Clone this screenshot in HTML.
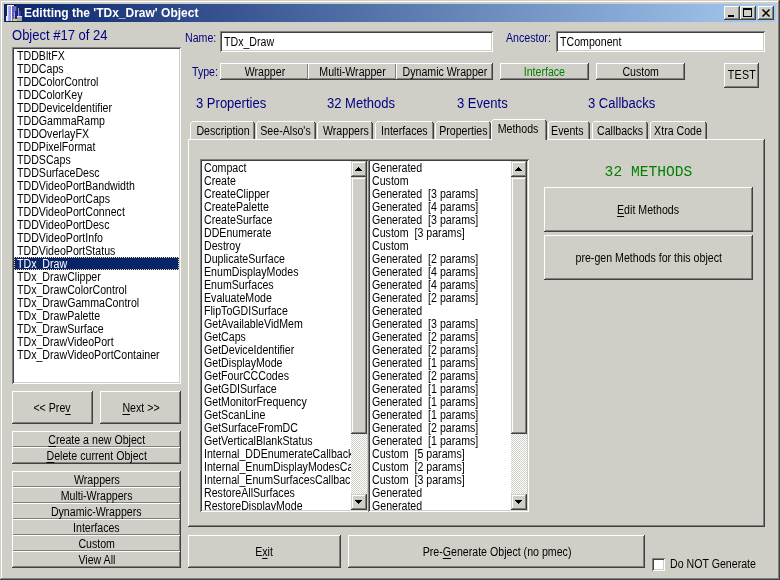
<!DOCTYPE html>
<html><head><meta charset="utf-8"><title>Editting the TDx_Draw Object</title>
<style>
html,body{margin:0;padding:0;}
body{width:780px;height:580px;overflow:hidden;background:#d0cfc7;font-family:"Liberation Sans",sans-serif;font-size:12px;color:#000;position:relative;}
*{box-sizing:border-box;}
.a{position:absolute;}
.win{left:0;top:0;width:780px;height:580px;background:#d0cfc7;box-shadow:inset -1px -1px 0 #404040,inset 1px 1px 0 #d0cfc7,inset -2px -2px 0 #808080,inset 2px 2px 0 #fff;}
.title{left:4px;top:4px;width:772px;height:18px;background:linear-gradient(90deg,#0a246a 0%,#a6caf0 100%);}
.title .tx{left:20px;top:2px;color:#fff;font-weight:bold;font-size:12px;line-height:14px;white-space:pre;}
.btn{background:#d0cfc7;box-shadow:inset -1px -1px 0 #404040,inset 1px 1px 0 #fff,inset -2px -2px 0 #808080;text-align:center;white-space:pre;}
.btn .t{display:inline-block;transform:scaleX(0.885);transform-origin:50% 50%;}
.sbtn{background:#d0cfc7;box-shadow:inset -1px -1px 0 #404040,inset 1px 1px 0 #d0cfc7,inset -2px -2px 0 #808080,inset 2px 2px 0 #fff;}
.sunk{background:#fff;box-shadow:inset 1px 1px 0 #808080,inset -1px -1px 0 #fff,inset 2px 2px 0 #404040,inset -2px -2px 0 #d0cfc7;}
.lt{display:block;transform:scaleX(0.885);transform-origin:0 50%;white-space:pre;}
.row{position:absolute;left:0;height:13px;line-height:13px;padding-top:1px;font-size:12px;white-space:pre;}
.lbl{color:#000080;white-space:pre;}
.big{font-size:14px;color:#000080;white-space:pre;line-height:16px;transform:scaleX(.93);transform-origin:0 50%;}
u{text-decoration:underline;text-underline-offset:2px;text-decoration-thickness:1px;}
.tab{background:#d0cfc7;text-align:center;white-space:pre;font-size:12px;line-height:13px;}
.tab .t{display:inline-block;transform:scaleX(0.885);transform-origin:50% 50%;}
.sb{background:#eae8e4;background-image:conic-gradient(#fff 25%,#d0cfc7 0 50%,#fff 0 75%,#d0cfc7 0);background-size:2px 2px;}
.cb{width:16px;height:16px;}
</style></head>
<body>
<div class="a win"></div>
<div class="a" id="root" style="left:0;top:0;width:780px;height:580px;will-change:transform;">
<div class="a title">
<svg class="a" style="left:2px;top:1px" width="16" height="16" viewBox="0 0 16 16" shape-rendering="crispEdges">
<rect x="1" y="0" width="5" height="16" fill="#9c9cde"/>
<rect x="0" y="5" width="1" height="11" fill="#e8e8f4"/>
<rect x="0" y="5" width="1" height="6" fill="#202040"/>
<rect x="1" y="0" width="1" height="16" fill="#ececfc"/><rect x="2" y="1" width="1" height="15" fill="#b4b4f0"/>
<rect x="2" y="0" width="6" height="1" fill="#ffffff"/>
<rect x="5" y="0" width="1" height="16" fill="#f4f4fc"/>
<rect x="6" y="1" width="4" height="15" fill="#6c6cc0"/><rect x="6" y="2" width="2" height="1" fill="#5454a8"/><rect x="6" y="4" width="2" height="1" fill="#5454a8"/><rect x="6" y="6" width="2" height="1" fill="#5454a8"/><rect x="6" y="8" width="2" height="1" fill="#5454a8"/><rect x="6" y="10" width="2" height="1" fill="#5454a8"/><rect x="6" y="12" width="2" height="1" fill="#5454a8"/>
<rect x="8" y="0" width="2" height="1" fill="#000"/>
<rect x="10" y="1" width="1" height="5" fill="#404060"/>
<rect x="9" y="6" width="3" height="8" fill="#1c1c9c"/>
<rect x="8" y="7" width="1" height="8" fill="#b0b0c8"/>
<rect x="12" y="3" width="1" height="9" fill="#a8a090"/>
<rect x="13" y="6" width="2" height="6" fill="#3434a8"/>
<rect x="11" y="11" width="5" height="5" fill="#a8a8a8"/>
<rect x="11" y="11" width="5" height="1" fill="#e0e0e0"/>
<rect x="7" y="14" width="4" height="2" fill="#dcdc38"/>
</svg>
<div class="a tx">Editting the 'TDx_Draw' Object</div>
<div class="a btn" style="left:720px;top:2px;width:16px;height:14px;"><svg class="a" style="left:0;top:0" width="16" height="14" shape-rendering="crispEdges"><rect x="4" y="9" width="6" height="2" fill="#000"/></svg></div>
<div class="a btn" style="left:736px;top:2px;width:16px;height:14px;"><svg class="a" style="left:0;top:0" width="16" height="14" shape-rendering="crispEdges"><rect x="3" y="2" width="8" height="8" fill="none" stroke="#000" stroke-width="1" transform="translate(.5,.5)"/><rect x="3" y="2" width="9" height="2" fill="#000"/></svg></div>
<div class="a btn" style="left:754px;top:2px;width:16px;height:14px;"><svg class="a" style="left:0;top:0" width="16" height="14"><path d="M4.5 3.5 L11.5 10.5 M11.5 3.5 L4.5 10.5" stroke="#000" stroke-width="1.5" fill="none"/></svg></div>
</div>
<div class="a big" style="left:12px;top:27px;">Object #17 of 24</div>
<div class="a sunk" style="left:12px;top:47px;width:169px;height:337px;"><div class="a" style="left:2px;top:2px;width:165px;height:333px;overflow:hidden;">
<div class="row" style="top:0px;left:3px;"><span class="lt">TDDBltFX</span></div>
<div class="row" style="top:13px;left:3px;"><span class="lt">TDDCaps</span></div>
<div class="row" style="top:26px;left:3px;"><span class="lt">TDDColorControl</span></div>
<div class="row" style="top:39px;left:3px;"><span class="lt">TDDColorKey</span></div>
<div class="row" style="top:52px;left:3px;"><span class="lt">TDDDeviceIdentifier</span></div>
<div class="row" style="top:65px;left:3px;"><span class="lt">TDDGammaRamp</span></div>
<div class="row" style="top:78px;left:3px;"><span class="lt">TDDOverlayFX</span></div>
<div class="row" style="top:91px;left:3px;"><span class="lt">TDDPixelFormat</span></div>
<div class="row" style="top:104px;left:3px;"><span class="lt">TDDSCaps</span></div>
<div class="row" style="top:117px;left:3px;"><span class="lt">TDDSurfaceDesc</span></div>
<div class="row" style="top:130px;left:3px;"><span class="lt">TDDVideoPortBandwidth</span></div>
<div class="row" style="top:143px;left:3px;"><span class="lt">TDDVideoPortCaps</span></div>
<div class="row" style="top:156px;left:3px;"><span class="lt">TDDVideoPortConnect</span></div>
<div class="row" style="top:169px;left:3px;"><span class="lt">TDDVideoPortDesc</span></div>
<div class="row" style="top:182px;left:3px;"><span class="lt">TDDVideoPortInfo</span></div>
<div class="row" style="top:195px;left:3px;"><span class="lt">TDDVideoPortStatus</span></div>
<div class="a" style="left:0;top:208px;width:165px;height:13px;background:#0a246a;border:1px dotted #f5db95;"></div>
<div class="row" style="top:208px;left:3px;color:#fff;"><span class="lt">TDx_Draw</span></div>
<div class="row" style="top:221px;left:3px;"><span class="lt">TDx_DrawClipper</span></div>
<div class="row" style="top:234px;left:3px;"><span class="lt">TDx_DrawColorControl</span></div>
<div class="row" style="top:247px;left:3px;"><span class="lt">TDx_DrawGammaControl</span></div>
<div class="row" style="top:260px;left:3px;"><span class="lt">TDx_DrawPalette</span></div>
<div class="row" style="top:273px;left:3px;"><span class="lt">TDx_DrawSurface</span></div>
<div class="row" style="top:286px;left:3px;"><span class="lt">TDx_DrawVideoPort</span></div>
<div class="row" style="top:299px;left:3px;"><span class="lt">TDx_DrawVideoPortContainer</span></div>
</div></div>
<div class="a btn" style="left:12px;top:391px;width:81px;height:33px;"><div class="a" style="left:0px;right:0px;top:10px;line-height:14px;height:14px;"><span class="t">&lt;&lt; Pre<u>v</u></span></div></div>
<div class="a btn" style="left:100px;top:391px;width:81px;height:33px;padding-left:0;"><div class="a" style="left:1px;right:-1px;top:10px;line-height:14px;height:14px;"><span class="t"><u>N</u>ext &gt;&gt;</span></div></div>
<div class="a btn" style="left:12px;top:431px;width:169px;height:17px;"><div class="a" style="left:0px;right:0px;top:2px;line-height:14px;height:14px;"><span class="t"><u>C</u>reate a new Object</span></div></div>
<div class="a btn" style="left:12px;top:447px;width:169px;height:17px;"><div class="a" style="left:0px;right:0px;top:2px;line-height:14px;height:14px;"><span class="t"><u>D</u>elete current Object</span></div></div>
<div class="a btn" style="left:12px;top:471px;width:169px;height:17px;"><div class="a" style="left:0px;right:0px;top:2px;line-height:14px;height:14px;"><span class="t">Wrappers</span></div></div>
<div class="a btn" style="left:12px;top:487px;width:169px;height:17px;"><div class="a" style="left:0px;right:0px;top:2px;line-height:14px;height:14px;"><span class="t">Multi-Wrappers</span></div></div>
<div class="a btn" style="left:12px;top:503px;width:169px;height:17px;"><div class="a" style="left:0px;right:0px;top:2px;line-height:14px;height:14px;"><span class="t">Dynamic-Wrappers</span></div></div>
<div class="a btn" style="left:12px;top:519px;width:169px;height:17px;"><div class="a" style="left:0px;right:0px;top:2px;line-height:14px;height:14px;"><span class="t">Interfaces</span></div></div>
<div class="a btn" style="left:12px;top:535px;width:169px;height:17px;"><div class="a" style="left:0px;right:0px;top:2px;line-height:14px;height:14px;"><span class="t">Custom</span></div></div>
<div class="a btn" style="left:12px;top:551px;width:169px;height:17px;"><div class="a" style="left:0px;right:0px;top:2px;line-height:14px;height:14px;"><span class="t">View All</span></div></div>
<div class="a lbl" style="left:185px;top:31px;line-height:14px;"><span class="lt">Name:</span></div>
<div class="a sunk" style="left:220px;top:31px;width:273px;height:21px;"><div class="a" style="left:4px;top:4px;line-height:14px;"><span class="lt">TDx_Draw</span></div></div>
<div class="a lbl" style="left:506px;top:31px;line-height:14px;"><span class="lt">Ancestor:</span></div>
<div class="a sunk" style="left:556px;top:31px;width:209px;height:21px;"><div class="a" style="left:4px;top:4px;line-height:14px;"><span class="lt">TComponent</span></div></div>
<div class="a lbl" style="left:192px;top:65px;line-height:14px;"><span class="lt">Type:</span></div>
<div class="a btn" style="left:220px;top:63px;width:89px;height:17px;"><div class="a" style="left:0px;right:0px;top:2px;line-height:14px;height:14px;"><span class="t">Wrapper</span></div></div>
<div class="a btn" style="left:308px;top:63px;width:89px;height:17px;"><div class="a" style="left:0px;right:0px;top:2px;line-height:14px;height:14px;"><span class="t">Multi-Wrapper</span></div></div>
<div class="a btn" style="left:396px;top:63px;width:97px;height:17px;"><div class="a" style="left:0px;right:0px;top:2px;line-height:14px;height:14px;"><span class="t">Dynamic Wrapper</span></div></div>
<div class="a btn" style="left:500px;top:63px;width:89px;height:17px;color:#008000;"><div class="a" style="left:0px;right:0px;top:2px;line-height:14px;height:14px;"><span class="t">Interface</span></div></div>
<div class="a btn" style="left:596px;top:63px;width:89px;height:17px;"><div class="a" style="left:0px;right:0px;top:2px;line-height:14px;height:14px;"><span class="t">Custom</span></div></div>
<div class="a btn" style="left:724px;top:63px;width:35px;height:25px;letter-spacing:0.3px;"><div class="a" style="left:0px;right:0px;top:5px;line-height:14px;height:14px;"><span class="t">TEST</span></div></div>
<div class="a big" style="left:196px;top:95px;">3 Properties</div>
<div class="a big" style="left:327px;top:95px;">32 Methods</div>
<div class="a big" style="left:457px;top:95px;">3 Events</div>
<div class="a big" style="left:588px;top:95px;">3 Callbacks</div>
<div class="a" style="left:188px;top:139px;width:577px;height:388px;background:#d0cfc7;box-shadow:inset -1px -1px 0 #404040,inset 1px 1px 0 #fff,inset -2px -2px 0 #808080;"></div>
<div class="a" style="left:190px;top:121px;width:65px;height:18px;"><div class="a" style="left:0;top:2px;width:1px;bottom:0;background:#fff;"></div><div class="a" style="left:1px;top:1px;width:1px;height:1px;background:#fff;"></div><div class="a" style="left:2px;top:0;right:2px;height:1px;background:#fff;"></div><div class="a" style="right:1px;top:1px;width:1px;height:1px;background:#404040;"></div><div class="a" style="right:0;top:2px;width:1px;bottom:0;background:#404040;"></div><div class="a" style="right:1px;top:2px;width:1px;bottom:0;background:#808080;"></div><div class="a tab" style="left:3px;right:1px;top:4px;background:transparent;"><span class="t">Description</span></div></div>
<div class="a" style="left:256px;top:121px;width:60px;height:18px;"><div class="a" style="left:0;top:2px;width:1px;bottom:0;background:#fff;"></div><div class="a" style="left:1px;top:1px;width:1px;height:1px;background:#fff;"></div><div class="a" style="left:2px;top:0;right:2px;height:1px;background:#fff;"></div><div class="a" style="right:1px;top:1px;width:1px;height:1px;background:#404040;"></div><div class="a" style="right:0;top:2px;width:1px;bottom:0;background:#404040;"></div><div class="a" style="right:1px;top:2px;width:1px;bottom:0;background:#808080;"></div><div class="a tab" style="left:1px;right:3px;top:4px;background:transparent;"><span class="t">See-Also's</span></div></div>
<div class="a" style="left:317px;top:121px;width:56px;height:18px;"><div class="a" style="left:0;top:2px;width:1px;bottom:0;background:#fff;"></div><div class="a" style="left:1px;top:1px;width:1px;height:1px;background:#fff;"></div><div class="a" style="left:2px;top:0;right:2px;height:1px;background:#fff;"></div><div class="a" style="right:1px;top:1px;width:1px;height:1px;background:#404040;"></div><div class="a" style="right:0;top:2px;width:1px;bottom:0;background:#404040;"></div><div class="a" style="right:1px;top:2px;width:1px;bottom:0;background:#808080;"></div><div class="a tab" style="left:2.5px;right:1.5px;top:4px;background:transparent;"><span class="t">Wrappers</span></div></div>
<div class="a" style="left:375px;top:121px;width:59px;height:18px;"><div class="a" style="left:0;top:2px;width:1px;bottom:0;background:#fff;"></div><div class="a" style="left:1px;top:1px;width:1px;height:1px;background:#fff;"></div><div class="a" style="left:2px;top:0;right:2px;height:1px;background:#fff;"></div><div class="a" style="right:1px;top:1px;width:1px;height:1px;background:#404040;"></div><div class="a" style="right:0;top:2px;width:1px;bottom:0;background:#404040;"></div><div class="a" style="right:1px;top:2px;width:1px;bottom:0;background:#808080;"></div><div class="a tab" style="left:1.5px;right:2.5px;top:4px;background:transparent;"><span class="t">Interfaces</span></div></div>
<div class="a" style="left:435px;top:121px;width:56px;height:18px;"><div class="a" style="left:0;top:2px;width:1px;bottom:0;background:#fff;"></div><div class="a" style="left:1px;top:1px;width:1px;height:1px;background:#fff;"></div><div class="a" style="left:2px;top:0;right:2px;height:1px;background:#fff;"></div><div class="a" style="right:1px;top:1px;width:1px;height:1px;background:#404040;"></div><div class="a" style="right:0;top:2px;width:1px;bottom:0;background:#404040;"></div><div class="a" style="right:1px;top:2px;width:1px;bottom:0;background:#808080;"></div><div class="a tab" style="left:0.5px;right:3.5px;top:4px;background:transparent;"><span class="t">Properties</span></div></div>
<div class="a" style="left:548px;top:121px;width:42px;height:18px;"><div class="a" style="left:0;top:2px;width:1px;bottom:0;background:#fff;"></div><div class="a" style="left:1px;top:1px;width:1px;height:1px;background:#fff;"></div><div class="a" style="left:2px;top:0;right:2px;height:1px;background:#fff;"></div><div class="a" style="right:1px;top:1px;width:1px;height:1px;background:#404040;"></div><div class="a" style="right:0;top:2px;width:1px;bottom:0;background:#404040;"></div><div class="a" style="right:1px;top:2px;width:1px;bottom:0;background:#808080;"></div><div class="a tab" style="left:0.5px;right:3.5px;top:4px;background:transparent;"><span class="t">Events</span></div></div>
<div class="a" style="left:592px;top:121px;width:56px;height:18px;"><div class="a" style="left:0;top:2px;width:1px;bottom:0;background:#fff;"></div><div class="a" style="left:1px;top:1px;width:1px;height:1px;background:#fff;"></div><div class="a" style="left:2px;top:0;right:2px;height:1px;background:#fff;"></div><div class="a" style="right:1px;top:1px;width:1px;height:1px;background:#404040;"></div><div class="a" style="right:0;top:2px;width:1px;bottom:0;background:#404040;"></div><div class="a" style="right:1px;top:2px;width:1px;bottom:0;background:#808080;"></div><div class="a tab" style="left:1.5px;right:2.5px;top:4px;background:transparent;"><span class="t">Callbacks</span></div></div>
<div class="a" style="left:650px;top:121px;width:57px;height:18px;"><div class="a" style="left:0;top:2px;width:1px;bottom:0;background:#fff;"></div><div class="a" style="left:1px;top:1px;width:1px;height:1px;background:#fff;"></div><div class="a" style="left:2px;top:0;right:2px;height:1px;background:#fff;"></div><div class="a" style="right:1px;top:1px;width:1px;height:1px;background:#404040;"></div><div class="a" style="right:0;top:2px;width:1px;bottom:0;background:#404040;"></div><div class="a" style="right:1px;top:2px;width:1px;bottom:0;background:#808080;"></div><div class="a tab" style="left:0.5px;right:3.5px;top:4px;background:transparent;"><span class="t">Xtra Code</span></div></div>
<div class="a" style="left:491px;top:119px;width:56px;height:22px;background:#d0cfc7;"></div>
<div class="a" style="left:491px;top:119px;width:56px;height:21px;"><div class="a" style="left:0;top:2px;width:1px;bottom:0;background:#fff;"></div><div class="a" style="left:1px;top:1px;width:1px;height:1px;background:#fff;"></div><div class="a" style="left:2px;top:0;right:2px;height:1px;background:#fff;"></div><div class="a" style="right:1px;top:1px;width:1px;height:1px;background:#404040;"></div><div class="a" style="right:0;top:2px;width:1px;bottom:0;background:#404040;"></div><div class="a" style="right:1px;top:2px;width:1px;bottom:0;background:#808080;"></div><div class="a tab" style="left:1.5px;right:2.5px;top:4px;background:transparent;"><span class="t">Methods</span></div></div>
<div class="a sunk" style="left:200px;top:159px;width:169px;height:353px;"><div class="a" style="left:2px;top:2px;width:149px;height:349px;overflow:hidden;">
<div class="row" style="top:0px;left:2px;"><span class="lt">Compact</span></div>
<div class="row" style="top:13px;left:2px;"><span class="lt">Create</span></div>
<div class="row" style="top:26px;left:2px;"><span class="lt">CreateClipper</span></div>
<div class="row" style="top:39px;left:2px;"><span class="lt">CreatePalette</span></div>
<div class="row" style="top:52px;left:2px;"><span class="lt">CreateSurface</span></div>
<div class="row" style="top:65px;left:2px;"><span class="lt">DDEnumerate</span></div>
<div class="row" style="top:78px;left:2px;"><span class="lt">Destroy</span></div>
<div class="row" style="top:91px;left:2px;"><span class="lt">DuplicateSurface</span></div>
<div class="row" style="top:104px;left:2px;"><span class="lt">EnumDisplayModes</span></div>
<div class="row" style="top:117px;left:2px;"><span class="lt">EnumSurfaces</span></div>
<div class="row" style="top:130px;left:2px;"><span class="lt">EvaluateMode</span></div>
<div class="row" style="top:143px;left:2px;"><span class="lt">FlipToGDISurface</span></div>
<div class="row" style="top:156px;left:2px;"><span class="lt">GetAvailableVidMem</span></div>
<div class="row" style="top:169px;left:2px;"><span class="lt">GetCaps</span></div>
<div class="row" style="top:182px;left:2px;"><span class="lt">GetDeviceIdentifier</span></div>
<div class="row" style="top:195px;left:2px;"><span class="lt">GetDisplayMode</span></div>
<div class="row" style="top:208px;left:2px;"><span class="lt">GetFourCCCodes</span></div>
<div class="row" style="top:221px;left:2px;"><span class="lt">GetGDISurface</span></div>
<div class="row" style="top:234px;left:2px;"><span class="lt">GetMonitorFrequency</span></div>
<div class="row" style="top:247px;left:2px;"><span class="lt">GetScanLine</span></div>
<div class="row" style="top:260px;left:2px;"><span class="lt">GetSurfaceFromDC</span></div>
<div class="row" style="top:273px;left:2px;"><span class="lt">GetVerticalBlankStatus</span></div>
<div class="row" style="top:286px;left:2px;"><span class="lt">Internal_DDEnumerateCallback</span></div>
<div class="row" style="top:299px;left:2px;"><span class="lt">Internal_EnumDisplayModesCallback</span></div>
<div class="row" style="top:312px;left:2px;"><span class="lt">Internal_EnumSurfacesCallback</span></div>
<div class="row" style="top:325px;left:2px;"><span class="lt">RestoreAllSurfaces</span></div>
<div class="row" style="top:338px;left:2px;"><span class="lt">RestoreDisplayMode</span></div>
</div>
<div class="a sb" style="left:151px;top:2px;width:16px;height:349px;"></div>
<div class="a sbtn" style="left:151px;top:2px;width:16px;height:16px;"><svg class="a" style="left:0;top:1px" width="16" height="16" shape-rendering="crispEdges"><path d="M4 9 h7 v-1 h-1 v-1 h-1 v-1 h-1 v-1 h-1 v1 h-1 v1 h-1 v1 h-1z" fill="#000"/></svg></div>
<div class="a sbtn" style="left:151px;top:18px;width:16px;height:257px;"></div>
<div class="a sbtn" style="left:151px;top:335px;width:16px;height:16px;"><svg class="a" style="left:0;top:0" width="16" height="16" shape-rendering="crispEdges"><path d="M4 6 h7 v1 h-1 v1 h-1 v1 h-1 v1 h-1 v-1 h-1 v-1 h-1 v-1 h-1z" fill="#000"/></svg></div>
</div>
<div class="a sunk" style="left:368px;top:159px;width:161px;height:353px;"><div class="a" style="left:2px;top:2px;width:141px;height:349px;overflow:hidden;">
<div class="row" style="top:0px;left:2px;"><span class="lt">Generated</span></div>
<div class="row" style="top:13px;left:2px;"><span class="lt">Custom</span></div>
<div class="row" style="top:26px;left:2px;"><span class="lt">Generated  [3 params]</span></div>
<div class="row" style="top:39px;left:2px;"><span class="lt">Generated  [4 params]</span></div>
<div class="row" style="top:52px;left:2px;"><span class="lt">Generated  [3 params]</span></div>
<div class="row" style="top:65px;left:2px;"><span class="lt">Custom  [3 params]</span></div>
<div class="row" style="top:78px;left:2px;"><span class="lt">Custom</span></div>
<div class="row" style="top:91px;left:2px;"><span class="lt">Generated  [2 params]</span></div>
<div class="row" style="top:104px;left:2px;"><span class="lt">Generated  [4 params]</span></div>
<div class="row" style="top:117px;left:2px;"><span class="lt">Generated  [4 params]</span></div>
<div class="row" style="top:130px;left:2px;"><span class="lt">Generated  [2 params]</span></div>
<div class="row" style="top:143px;left:2px;"><span class="lt">Generated</span></div>
<div class="row" style="top:156px;left:2px;"><span class="lt">Generated  [3 params]</span></div>
<div class="row" style="top:169px;left:2px;"><span class="lt">Generated  [2 params]</span></div>
<div class="row" style="top:182px;left:2px;"><span class="lt">Generated  [2 params]</span></div>
<div class="row" style="top:195px;left:2px;"><span class="lt">Generated  [1 params]</span></div>
<div class="row" style="top:208px;left:2px;"><span class="lt">Generated  [2 params]</span></div>
<div class="row" style="top:221px;left:2px;"><span class="lt">Generated  [1 params]</span></div>
<div class="row" style="top:234px;left:2px;"><span class="lt">Generated  [1 params]</span></div>
<div class="row" style="top:247px;left:2px;"><span class="lt">Generated  [1 params]</span></div>
<div class="row" style="top:260px;left:2px;"><span class="lt">Generated  [2 params]</span></div>
<div class="row" style="top:273px;left:2px;"><span class="lt">Generated  [1 params]</span></div>
<div class="row" style="top:286px;left:2px;"><span class="lt">Custom  [5 params]</span></div>
<div class="row" style="top:299px;left:2px;"><span class="lt">Custom  [2 params]</span></div>
<div class="row" style="top:312px;left:2px;"><span class="lt">Custom  [3 params]</span></div>
<div class="row" style="top:325px;left:2px;"><span class="lt">Generated</span></div>
<div class="row" style="top:338px;left:2px;"><span class="lt">Generated</span></div>
</div>
<div class="a sb" style="left:143px;top:2px;width:16px;height:349px;"></div>
<div class="a sbtn" style="left:143px;top:2px;width:16px;height:16px;"><svg class="a" style="left:0;top:1px" width="16" height="16" shape-rendering="crispEdges"><path d="M4 9 h7 v-1 h-1 v-1 h-1 v-1 h-1 v-1 h-1 v1 h-1 v1 h-1 v1 h-1z" fill="#000"/></svg></div>
<div class="a sbtn" style="left:143px;top:18px;width:16px;height:257px;"></div>
<div class="a sbtn" style="left:143px;top:335px;width:16px;height:16px;"><svg class="a" style="left:0;top:0" width="16" height="16" shape-rendering="crispEdges"><path d="M4 6 h7 v1 h-1 v1 h-1 v1 h-1 v1 h-1 v-1 h-1 v-1 h-1 v-1 h-1z" fill="#000"/></svg></div>
</div>
<div class="a" style="left:544px;top:165px;width:209px;text-align:center;color:#008000;font-family:'Liberation Mono',monospace;font-size:15px;line-height:16px;white-space:pre;transform:scaleX(.975);">32 METHODS</div>
<div class="a btn" style="left:544px;top:187px;width:209px;height:45px;"><div class="a" style="left:0px;right:0px;top:16px;line-height:14px;height:14px;"><span class="t"><u>E</u>dit Methods</span></div></div>
<div class="a btn" style="left:544px;top:235px;width:209px;height:45px;"><div class="a" style="left:0px;right:0px;top:16px;line-height:14px;height:14px;"><span class="t">pre-gen Methods for this object</span></div></div>
<div class="a btn" style="left:188px;top:535px;width:153px;height:33px;"><div class="a" style="left:0px;right:0px;top:10px;line-height:14px;height:14px;"><span class="t">E<u>x</u>it</span></div></div>
<div class="a btn" style="left:348px;top:535px;width:297px;height:33px;"><div class="a" style="left:0.5px;right:-0.5px;top:10px;line-height:14px;height:14px;"><span class="t">Pre-<u>G</u>enerate Object (no pmec)</span></div></div>
<div class="a sunk" style="left:652px;top:558px;width:13px;height:13px;"></div>
<div class="a " style="left:670px;top:557px;line-height:14px;"><span class="lt">Do NOT Generate</span></div>
</div>
</body></html>
